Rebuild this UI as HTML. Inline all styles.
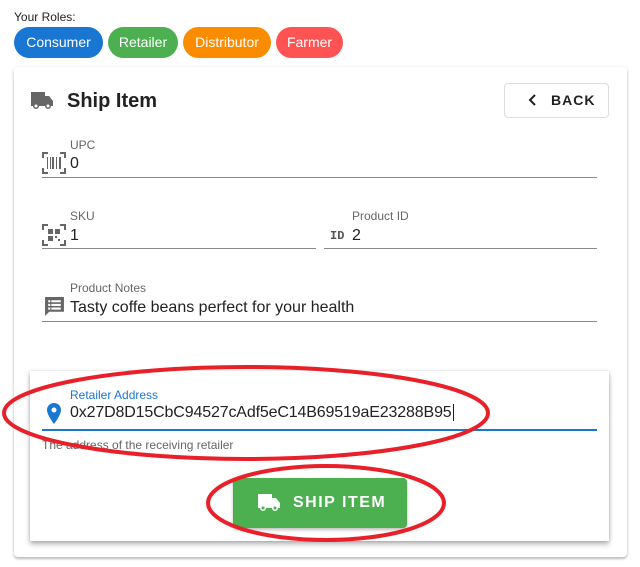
<!DOCTYPE html>
<html><head><meta charset="utf-8"><style>
*{box-sizing:border-box;margin:0;padding:0}
body{width:640px;height:567px;background:#fff;font-family:"Liberation Sans",sans-serif;position:relative;overflow:hidden;color:#222}
.a{position:absolute}
.chip{position:absolute;top:27px;height:31px;border-radius:16px;color:#fff;font-size:14px;line-height:31px;text-align:center}
.lbl{position:absolute;font-size:12px;color:#666}
.val{position:absolute;font-size:16px;color:#222}
.ln{position:absolute;height:1px;background:#8a8a8a}
</style></head><body>
<div class="a" style="left:14px;top:10px;font-size:12px">Your Roles:</div>
<div class="chip" style="left:14px;width:89px;background:#1976d2">Consumer</div>
<div class="chip" style="left:108px;width:70px;background:#4caf50">Retailer</div>
<div class="chip" style="left:183px;width:88px;background:#fb8c00">Distributor</div>
<div class="chip" style="left:276px;width:67px;background:#ff5252">Farmer</div>

<div class="a" style="left:14px;top:67px;width:613px;height:490px;border-radius:4px;box-shadow:0 2px 2px rgba(0,0,0,.2),0 1px 5px rgba(0,0,0,.12)"></div>
<svg class="a" style="left:30px;top:90px" width="24" height="20" viewBox="0 0 24 20"><path fill="#666" d="M1 2h14v4h4l4 5v5h-2a3 3 0 0 1-6 0H9a3 3 0 0 1-6 0H1z"/><circle cx="6" cy="16" r="1.5" fill="#fff"/><circle cx="18" cy="16" r="1.5" fill="#fff"/></svg>
<div class="a" style="left:67px;top:90px;font-size:20px;font-weight:bold;color:#222">Ship Item</div>
<div class="a" style="left:504px;top:83px;width:105px;height:35px;border:1px solid #ddd;border-radius:4px;font-size:14px;font-weight:bold;letter-spacing:1px;line-height:33px;padding-left:46px">BACK</div>
<svg class="a" style="left:528px;top:94px" width="10" height="12"><path d="M7 1 2 6l5 5" stroke="#222" stroke-width="2" fill="none"/></svg>

<svg class="a" style="left:42px;top:152px" width="24" height="22" viewBox="0 0 24 22"><path d="M1 6V1h5M18 1h5v5M23 16v5h-5M6 21H1v-5" stroke="#666" stroke-width="2" fill="none"/><path d="M5 5h1v12H5zM8 5h1v12H8zM10 5h2v12h-2zM14 5h1v12h-1zM17 5h2v12h-2z" fill="#666"/></svg>
<div class="lbl" style="left:70px;top:138px">UPC</div>
<div class="val" style="left:70px;top:155px">0</div>
<div class="ln" style="left:42px;top:177px;width:555px"></div>

<svg class="a" style="left:42px;top:224px" width="24" height="22" viewBox="0 0 24 22"><path d="M1 6V1h5M18 1h5v5M23 16v5h-5M6 21H1v-5" stroke="#666" stroke-width="2" fill="none"/><path d="M6 5h5v5H6zM13 5h5v5h-5zM6 12h5v5H6zM13 12h2v2h-2zM16 15h2v2h-2z" fill="#666"/></svg>
<div class="lbl" style="left:70px;top:209px">SKU</div>
<div class="val" style="left:70px;top:227px">1</div>
<div class="ln" style="left:42px;top:248px;width:274px"></div>
<div class="a" style="left:330px;top:229px;font-size:12px;font-weight:bold;color:#555;font-family:'Liberation Mono',monospace">ID</div>
<div class="lbl" style="left:352px;top:209px">Product ID</div>
<div class="val" style="left:352px;top:227px">2</div>
<div class="ln" style="left:324px;top:248px;width:273px"></div>

<svg class="a" style="left:44px;top:296px" width="21" height="21" viewBox="0 0 20 20"><path fill="#666" d="M1 1h18v14H5l-4 4z"/><path fill="#fff" d="M4 4h2v2H4zM7 4h9v2H7zM4 7.5h2v2H4zM7 7.5h9v2H7zM4 11h2v2H4zM7 11h9v2H7z"/></svg>
<div class="lbl" style="left:70px;top:281px">Product Notes</div>
<div class="val" style="left:70px;top:299px">Tasty coffe beans perfect for your health</div>
<div class="ln" style="left:42px;top:321px;width:555px"></div>

<div class="a" style="left:30px;top:371px;width:579px;height:170px;box-shadow:0 3px 5px rgba(0,0,0,.3),0 0 3px rgba(0,0,0,.12)"></div>
<div class="lbl" style="left:70px;top:388px;color:#1976d2">Retailer Address</div>
<svg class="a" style="left:47px;top:403px" width="14" height="21" viewBox="0 0 14 21"><path fill="#1976d2" d="M7 0a7 7 0 0 1 7 7c0 5-7 14-7 14S0 12 0 7a7 7 0 0 1 7-7z"/><circle cx="7" cy="7" r="2.5" fill="#fff"/></svg>
<div class="val" style="left:70px;top:404px;letter-spacing:-0.15px">0x27D8D15CbC94527cAdf5eC14B69519aE23288B95<span style="border-left:1px solid #222;margin-left:1px"></span></div>
<div class="a" style="left:42px;top:429px;width:555px;height:2px;background:#1976d2"></div>
<div class="a" style="left:42px;top:438px;font-size:12px;color:#666">The address of the receiving retailer</div>

<div class="a" style="left:233px;top:478px;width:174px;height:50px;background:#4caf50;border-radius:4px;box-shadow:0 2px 3px rgba(0,0,0,.25);color:#fff;font-size:16px;font-weight:bold;letter-spacing:1.5px;line-height:50px;padding-left:60px">SHIP ITEM</div>
<svg class="a" style="left:257px;top:492px" width="24" height="20" viewBox="0 0 24 20"><path fill="#fff" d="M1 2h14v4h4l4 5v5h-2a3 3 0 0 1-6 0H9a3 3 0 0 1-6 0H1z"/><circle cx="6" cy="16" r="1.5" fill="#4caf50"/><circle cx="18" cy="16" r="1.5" fill="#4caf50"/></svg>

<svg class="a" style="left:0;top:0" width="640" height="567"><ellipse cx="246" cy="413" rx="242" ry="46" stroke="#e8202a" stroke-width="4" fill="none"/><ellipse cx="326" cy="503" rx="118" ry="37" stroke="#e8202a" stroke-width="4" fill="none"/></svg>
</body></html>
